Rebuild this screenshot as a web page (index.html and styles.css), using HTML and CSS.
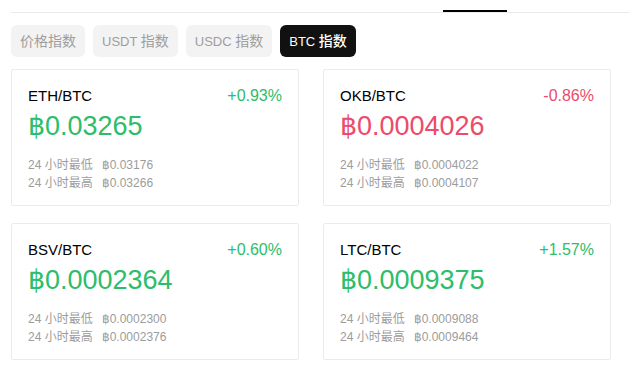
FILE: index.html
```html
<!DOCTYPE html>
<html lang="zh">
<head>
<meta charset="utf-8">
<link rel="stylesheet" href="styles.css">
</head>
<body>
<div class="page">
  <div class="topbar"><span class="indicator"></span></div>
  <div class="tabs">
    <div class="tab">价格指数</div>
    <div class="tab"><span class="en">USDT </span>指数</div>
    <div class="tab"><span class="en">USDC </span>指数</div>
    <div class="tab active"><span class="en">BTC </span>指数</div>
  </div>
  <div class="grid">
    <div class="card">
      <div class="head"><span class="pair">ETH/BTC</span><span class="chg up">+0.93%</span></div>
      <div class="price up">฿0.03265</div>
      <div class="stats">
        <div class="stat"><span class="lbl">24 小时最低</span><span class="val">฿0.03176</span></div>
        <div class="stat"><span class="lbl">24 小时最高</span><span class="val">฿0.03266</span></div>
      </div>
    </div>
    <div class="card">
      <div class="head"><span class="pair">OKB/BTC</span><span class="chg down">-0.86%</span></div>
      <div class="price down">฿0.0004026</div>
      <div class="stats">
        <div class="stat"><span class="lbl">24 小时最低</span><span class="val">฿0.0004022</span></div>
        <div class="stat"><span class="lbl">24 小时最高</span><span class="val">฿0.0004107</span></div>
      </div>
    </div>
    <div class="card">
      <div class="head"><span class="pair">BSV/BTC</span><span class="chg up">+0.60%</span></div>
      <div class="price up">฿0.0002364</div>
      <div class="stats">
        <div class="stat"><span class="lbl">24 小时最低</span><span class="val">฿0.0002300</span></div>
        <div class="stat"><span class="lbl">24 小时最高</span><span class="val">฿0.0002376</span></div>
      </div>
    </div>
    <div class="card">
      <div class="head"><span class="pair">LTC/BTC</span><span class="chg up">+1.57%</span></div>
      <div class="price up">฿0.0009375</div>
      <div class="stats">
        <div class="stat"><span class="lbl">24 小时最低</span><span class="val">฿0.0009088</span></div>
        <div class="stat"><span class="lbl">24 小时最高</span><span class="val">฿0.0009464</span></div>
      </div>
    </div>
  </div>
</div>
</body>
</html>
```
FILE: styles.css
```css
html, body {
  margin: 0;
  padding: 0;
  background: #ffffff;
}
body {
  font-family: "Liberation Sans", Arial, "Noto Sans CJK SC", sans-serif;
  color: #000;
}
.page {
  padding-left: 11px;
}
.topbar {
  height: 12px;
  border-bottom: 1px solid #ebebeb;
  display: flex;
  align-items: flex-end;
}
.indicator {
  display: block;
  width: 64px;
  height: 2px;
  margin-left: 432px;
  background: #000;
}
.tabs {
  display: flex;
  gap: 8px;
  margin-top: 12px;
}
.tab {
  height: 32px;
  line-height: 32px;
  padding: 0 9px;
  border-radius: 6px;
  background: #f3f3f3;
  color: #9e9e9e;
  font-size: 14px;
  white-space: nowrap;
}
.tab .en {
  font-size: 13px;
}
.tab.active {
  background: #111111;
  color: #ffffff;
  font-weight: 500;
}
.grid {
  display: grid;
  grid-template-columns: 288px 288px;
  column-gap: 24px;
  row-gap: 17px;
  margin-top: 12px;
}
.card {
  height: 137px;
  box-sizing: border-box;
  border: 1px solid #ebebeb;
  border-radius: 2px;
  padding: 16px 16px 0 16px;
}
.head {
  display: flex;
  justify-content: space-between;
  align-items: baseline;
  height: 20px;
  line-height: 20px;
}
.pair {
  font-size: 15px;
  color: #000;
}
.chg {
  font-size: 16px;
}
.up { color: #2dbd6b; }
.down { color: #ec4b6b; }
.price {
  font-size: 27px;
  line-height: 30px;
  margin-top: 5px;
  white-space: nowrap;
}
.stats {
  margin-top: 15px;
  font-size: 12px;
  line-height: 18px;
  color: #9c9c9c;
}
.stat {
  display: flex;
  gap: 9px;
}
```
